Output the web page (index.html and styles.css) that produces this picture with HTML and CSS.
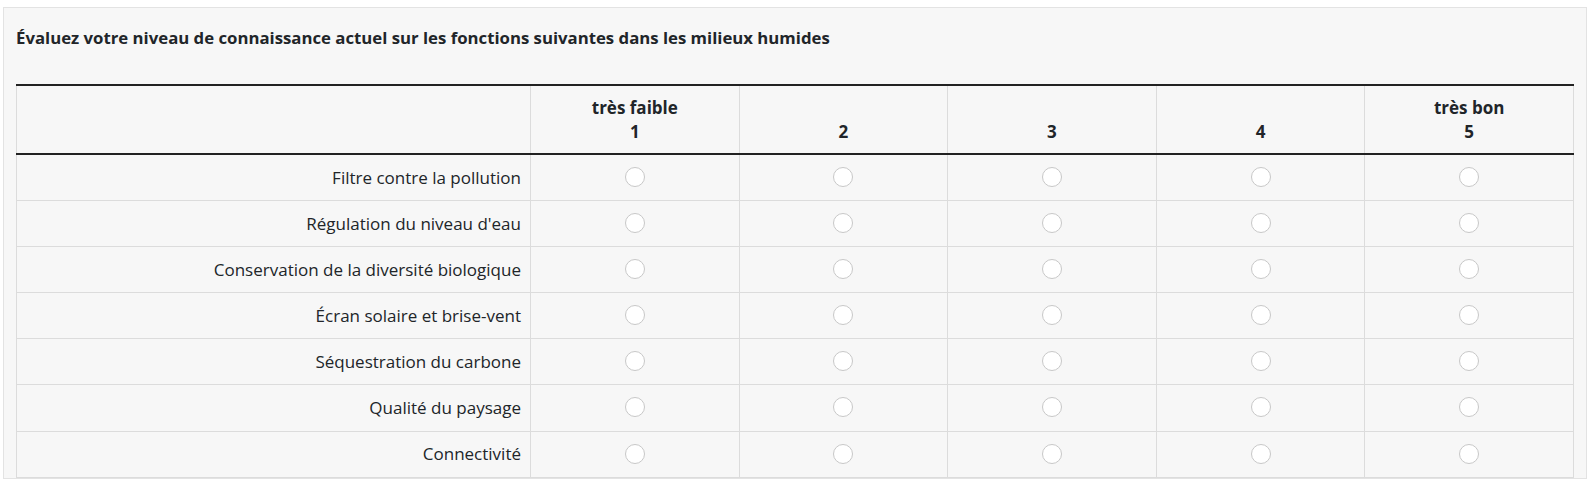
FILE: index.html
```html
<!DOCTYPE html>
<html lang="fr">
<head>
<meta charset="utf-8">
<title>Évaluation</title>
<link rel="stylesheet" href="styles.css">
</head>
<body>
<div class="page">
  <div class="panel">
    <h2 class="question">Évaluez votre niveau de connaissance actuel sur les fonctions suivantes dans les milieux humides</h2>
    <table class="matrix">
      <colgroup>
        <col class="col-label">
        <col class="col-opt"><col class="col-opt"><col class="col-opt"><col class="col-opt"><col class="col-opt">
      </colgroup>
      <thead>
        <tr>
          <th></th>
          <th><span class="anchor">très faible</span><span class="num">1</span></th>
          <th><span class="anchor"></span><span class="num">2</span></th>
          <th><span class="anchor"></span><span class="num">3</span></th>
          <th><span class="anchor"></span><span class="num">4</span></th>
          <th><span class="anchor">très bon</span><span class="num">5</span></th>
        </tr>
      </thead>
      <tbody>
        <tr><td class="label">Filtre contre la pollution</td><td><span class="radio"></span></td><td><span class="radio"></span></td><td><span class="radio"></span></td><td><span class="radio"></span></td><td><span class="radio"></span></td></tr>
        <tr><td class="label">Régulation du niveau d'eau</td><td><span class="radio"></span></td><td><span class="radio"></span></td><td><span class="radio"></span></td><td><span class="radio"></span></td><td><span class="radio"></span></td></tr>
        <tr><td class="label">Conservation de la diversité biologique</td><td><span class="radio"></span></td><td><span class="radio"></span></td><td><span class="radio"></span></td><td><span class="radio"></span></td><td><span class="radio"></span></td></tr>
        <tr><td class="label">Écran solaire et brise-vent</td><td><span class="radio"></span></td><td><span class="radio"></span></td><td><span class="radio"></span></td><td><span class="radio"></span></td><td><span class="radio"></span></td></tr>
        <tr><td class="label">Séquestration du carbone</td><td><span class="radio"></span></td><td><span class="radio"></span></td><td><span class="radio"></span></td><td><span class="radio"></span></td><td><span class="radio"></span></td></tr>
        <tr><td class="label">Qualité du paysage</td><td><span class="radio"></span></td><td><span class="radio"></span></td><td><span class="radio"></span></td><td><span class="radio"></span></td><td><span class="radio"></span></td></tr>
        <tr><td class="label">Connectivité</td><td><span class="radio"></span></td><td><span class="radio"></span></td><td><span class="radio"></span></td><td><span class="radio"></span></td><td><span class="radio"></span></td></tr>
      </tbody>
    </table>
  </div>
</div>
</body>
</html>
```

FILE: styles.css
```css
html, body {
  margin: 0;
  padding: 0;
  background: #ffffff;
}
body {
  font-family: "Open Sans", "Noto Sans", "Liberation Sans", sans-serif;
  color: #212529;
}
.page {
  padding: 7px 0 0 3px;
}
.panel {
  width: 1558px;
  background: #f7f7f7;
  border: 1px solid #e3e3e3;
  padding: 0 12px;
}
.question {
  margin: 0;
  padding: 18px 0 34px;
  font-size: 16.75px;
  line-height: 24px;
  font-weight: 700;
}
.matrix {
  width: 1558px;
  border-collapse: collapse;
  table-layout: fixed;
  font-size: 17px;
}
.col-label { width: 514px; }
.matrix thead tr {
  border-top: 2px solid #222222;
  border-bottom: 2px solid #222222;
}
.matrix th {
  height: 67px;
  padding: 0 8px;
  text-align: center;
  vertical-align: middle;
  font-weight: 700;
  border-left: 1px solid #dcdcdc;
  line-height: 24px;
}
.matrix th:last-child,
.matrix td:last-child {
  border-right: 1px solid #dcdcdc;
}
.anchor, .num {
  display: block;
  height: 24px;
}
.matrix td {
  height: 45.1px;
  padding: 0;
  text-align: center;
  vertical-align: middle;
  border-left: 1px solid #dcdcdc;
  border-bottom: 1px solid #dcdcdc;
}
.matrix td.label {
  text-align: right;
  padding-right: 9px;
  line-height: 24px;
}
.radio {
  display: inline-block;
  width: 18px;
  height: 18px;
  border: 1px solid #c8c8c8;
  border-radius: 50%;
  background: #ffffff;
  vertical-align: middle;
  margin-bottom: 3px;
}
```
